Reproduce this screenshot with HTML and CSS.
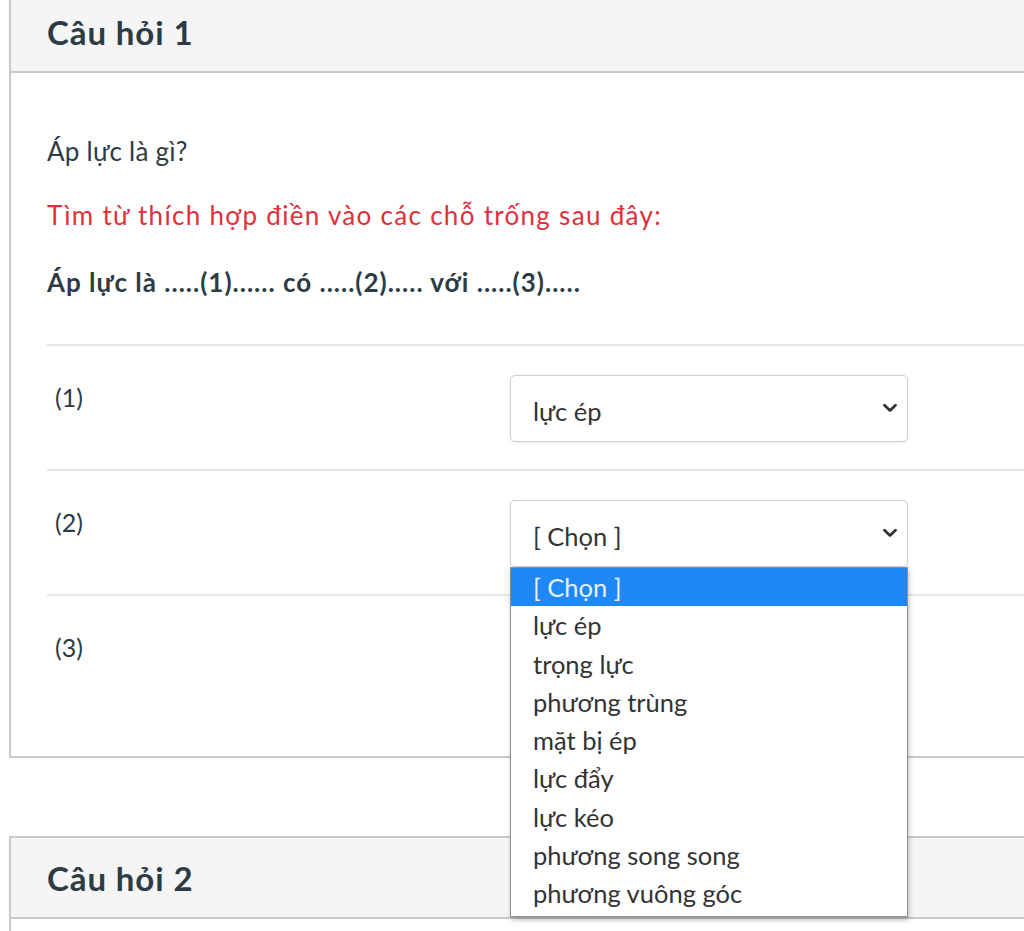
FILE: index.html
```html
<!DOCTYPE html>
<html lang="vi">
<head>
<meta charset="utf-8">
<title>Câu hỏi</title>
<link rel="stylesheet" href="styles.css">
</head>
<body>
<div class="page">
  <section class="card card-first">
    <header class="card-head"><h2>Câu hỏi 1</h2></header>
    <div class="card-body">
      <p class="q q1">Áp lực là gì?</p>
      <p class="q red">Tìm từ thích hợp điền vào các chỗ trống sau đây:</p>
      <p class="q bold">Áp lực là .....(1)...... có .....(2)..... với .....(3).....</p>
      <div class="rows">
        <div class="row">
          <div class="lbl">(1)</div>
          <div class="sel-wrap">
            <div class="sel"><span>lực ép</span>
              <svg class="chev" width="16" height="10" viewBox="0 0 16 10"><path d="M2.5 2.2 L8 7.5 L13.5 2.2" fill="none" stroke="#333" stroke-width="2.8" stroke-linecap="round" stroke-linejoin="round"/></svg>
            </div>
          </div>
        </div>
        <div class="row">
          <div class="lbl">(2)</div>
          <div class="sel-wrap">
            <div class="sel"><span>[ Chọn ]</span>
              <svg class="chev" width="16" height="10" viewBox="0 0 16 10"><path d="M2.5 2.2 L8 7.5 L13.5 2.2" fill="none" stroke="#333" stroke-width="2.8" stroke-linecap="round" stroke-linejoin="round"/></svg>
            </div>
            <ul class="menu">
              <li class="active">[ Chọn ]</li>
              <li>lực ép</li>
              <li>trọng lực</li>
              <li>phương trùng</li>
              <li>mặt bị ép</li>
              <li>lực đẩy</li>
              <li>lực kéo</li>
              <li>phương song song</li>
              <li>phương vuông góc</li>
            </ul>
          </div>
        </div>
        <div class="row">
          <div class="lbl">(3)</div>
          <div class="sel-wrap">
            <div class="sel sel-covered"><span>[ Chọn ]</span>
              <svg class="chev" width="16" height="10" viewBox="0 0 16 10"><path d="M2.5 2.2 L8 7.5 L13.5 2.2" fill="none" stroke="#333" stroke-width="2.8" stroke-linecap="round" stroke-linejoin="round"/></svg>
            </div>
          </div>
        </div>
      </div>
    </div>
  </section>
  <section class="card">
    <header class="card-head"><h2>Câu hỏi 2</h2></header>
    <div class="card-body"></div>
  </section>
</div>
</body>
</html>
```

FILE: styles.css
```css
html, body {
  margin: 0;
  padding: 0;
  background: #fff;
  overflow: hidden;
}
body {
  font-family: Lato, "Noto Sans", sans-serif;
  color: #2d3b45;
}
.page {
  padding-left: 9px;
}
.card {
  width: calc(100% + 40px);
  border: 2px solid #c9c9c9;
  box-sizing: border-box;
  margin-bottom: 78px;
}
.card-first {
  margin-top: -10px;
}
.card-head {
  height: 79px;
  background: #f5f5f5;
  border-bottom: 2px solid #c9c9c9;
  display: flex;
  align-items: center;
  padding-left: 36px;
}
.card-head h2 {
  margin: 0;
  font-size: 33px;
  font-weight: 700;
  letter-spacing: 0.9px;
  color: #2d3b45;
  line-height: 1;
  padding-top: 1px;
}
.card-body {
  padding: 60px 0 35px 36px;
}
.q {
  margin: 0 0 28px;
  font-size: 26px;
  line-height: 36px;
  color: #2d3b45;
}
.q1 {
  letter-spacing: 0.25px;
}
.red {
  color: #e0303a;
  letter-spacing: 1.3px;
  margin-bottom: 31px;
}
.bold {
  font-weight: 700;
  letter-spacing: 1px;
  margin-bottom: 44px;
}
.rows {
  border-top: 2px solid #e6e6e6;
}
.row {
  display: flex;
  height: 125px;
  border-bottom: 2px solid #e6e6e6;
  box-sizing: border-box;
}
.row:last-child {
  border-bottom: none;
}
.lbl {
  width: 463px;
  padding: 33px 0 0 8px;
  box-sizing: border-box;
  font-size: 25px;
  line-height: 36px;
  color: #2d3b45;
}
.sel-wrap {
  position: relative;
  width: 398px;
  padding-top: 29px;
}
.sel {
  height: 67px;
  border: 1px solid #cfcfcf;
  border-radius: 5px;
  box-sizing: border-box;
  box-shadow: 0 1px 3px rgba(0, 0, 0, 0.08);
  display: flex;
  align-items: center;
  justify-content: space-between;
  padding: 4px 9px 0 22px;
  font-size: 25.5px;
  color: #333;
  background: #fff;
}
.sel-covered {
  visibility: hidden;
}
.chev {
  margin-top: -6px;
}
.menu {
  position: absolute;
  left: 0;
  top: 96px;
  width: 398px;
  box-sizing: border-box;
  margin: 0;
  padding: 0 0 3px;
  list-style: none;
  background: #fff;
  border: 1px solid #8e8e8e;
  box-shadow: 1px 3px 5px rgba(0, 0, 0, 0.25);
  z-index: 5;
}
.menu li {
  height: 38.3px;
  line-height: 38px;
  padding-left: 22px;
  font-size: 25.5px;
  color: #333;
}
.menu li.active {
  background: #1e88f7;
  color: #e6f1ff;
}
```
